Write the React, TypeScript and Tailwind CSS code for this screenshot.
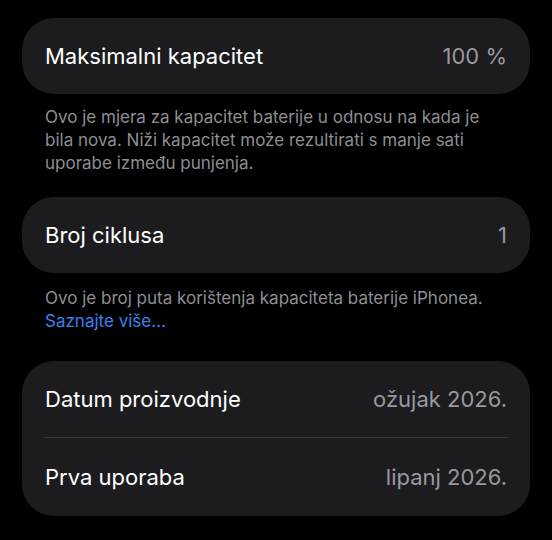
function Row({ label, value }: { label: string; value: string }) {
  return (
    <div className="flex h-[76px] items-center justify-between px-[23px]">
      <span className="text-[22px] text-white">{label}</span>
      <span className="text-[22px] text-[#98989f]">{value}</span>
    </div>
  )
}

export default function App() {
  return (
    <main
      className="min-h-dvh bg-black px-[22px] pt-[18px] pb-6"
      style={{ fontFamily: 'Inter, "Noto Sans", sans-serif' }}
    >
      {/* Maksimalni kapacitet */}
      <div className="rounded-[32px] bg-[#1c1c1e]">
        <Row label="Maksimalni kapacitet" value="100 %" />
      </div>
      <p className="mt-[12px] pl-[23px] pr-[30px] text-[17px] leading-[23px] text-[#8e8e93]">
        Ovo je mjera za kapacitet baterije u odnosu na kada je bila nova. Niži kapacitet može
        rezultirati s manje sati uporabe između punjenja.
      </p>

      {/* Broj ciklusa */}
      <div className="mt-[22px] rounded-[32px] bg-[#1c1c1e]">
        <Row label="Broj ciklusa" value="1" />
      </div>
      <p className="mt-[14px] px-[23px] text-[17px] leading-[23px] text-[#8e8e93]">
        Ovo je broj puta korištenja kapaciteta baterije iPhonea.
        <br />
        <span className="text-[#3b82f0]">Saznajte više…</span>
      </p>

      {/* Datumi */}
      <div className="mt-[28px] rounded-[32px] bg-[#1c1c1e]">
        <div className="flex h-[76px] items-center justify-between px-[23px]">
          <span className="text-[22px] text-white">Datum proizvodnje</span>
          <span className="text-[22px] text-[#98989f]">ožujak 2026.</span>
        </div>
        <div className="mx-[22px] h-px bg-[#38383a]" />
        <div className="flex h-[78px] items-center justify-between px-[23px]">
          <span className="text-[22px] text-white">Prva uporaba</span>
          <span className="text-[22px] text-[#98989f]">lipanj 2026.</span>
        </div>
      </div>
    </main>
  )
}
